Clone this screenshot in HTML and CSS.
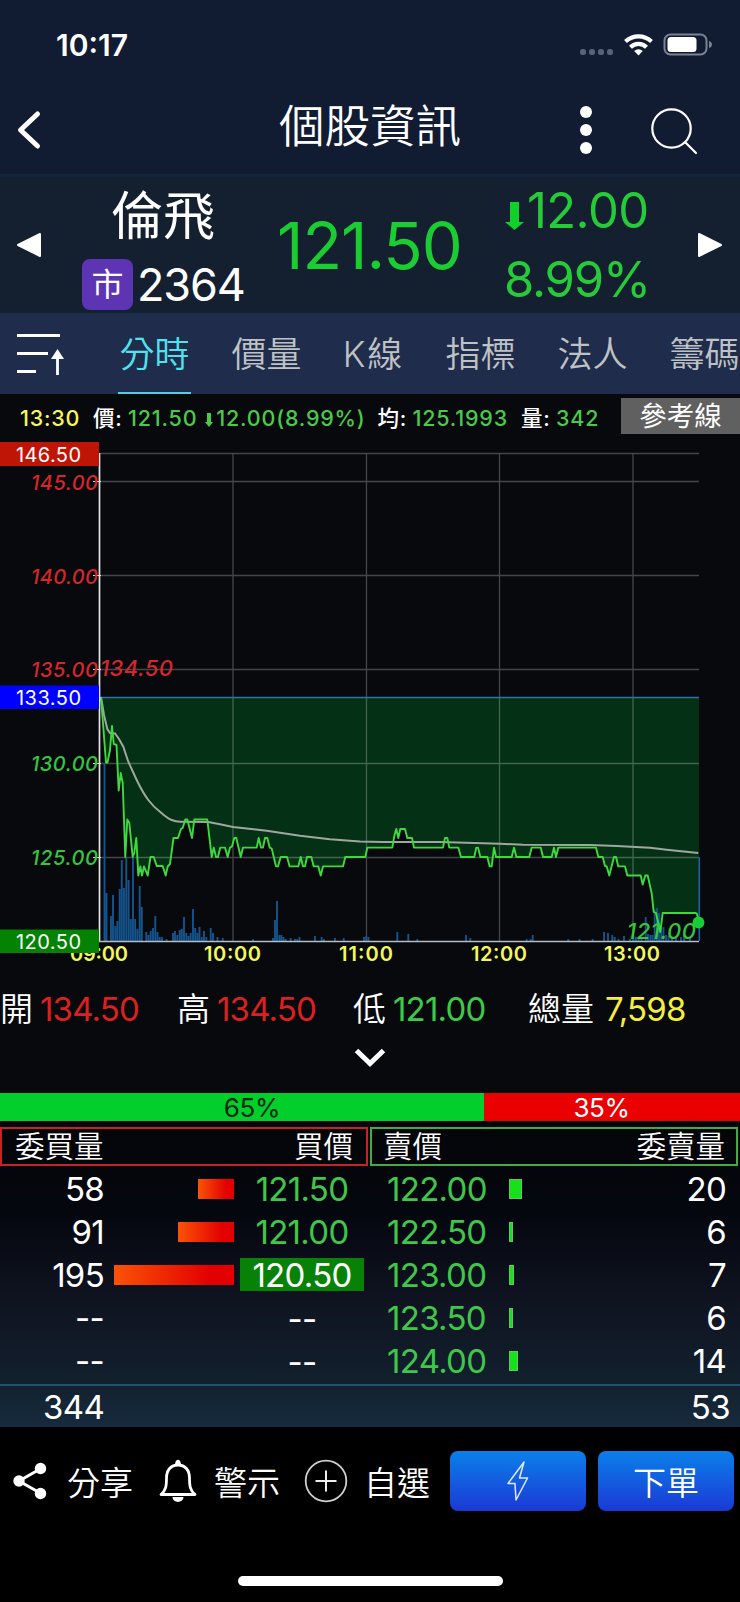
FILE: index.html
```html
<!DOCTYPE html>
<html lang="zh-Hant">
<head>
  <meta charset="UTF-8">
  <title>個股資訊</title>
  <link rel="stylesheet" href="styles.css">
</head>
<body>
  <div class="status-bar">
    <span class="clock">10:17</span>
    <svg class="status-icons" width="136" height="26" viewBox="0 0 136 26">
      <g fill="#5a6277">
        <rect x="4" y="16" width="6" height="6" rx="2.5"/>
        <rect x="13" y="16" width="6" height="6" rx="2.5"/>
        <rect x="22" y="16" width="6" height="6" rx="2.5"/>
        <rect x="31" y="16" width="6" height="6" rx="2.5"/>
      </g>
      <g fill="none" stroke="#fff" stroke-width="4.2">
        <path d="M49.500 8.500a19 19 0 0 1 26 0"/>
        <path d="M54.500 14.200a11.500 11.500 0 0 1 16 0"/>
      </g>
      <path d="M62.500 22.500l-4.300-4.600a6.200 6.200 0 0 1 8.600 0z" fill="#fff"/>
      <rect x="88.500" y="1.500" width="42" height="20" rx="6" fill="none" stroke="#7a8192" stroke-width="2"/>
      <rect x="91.500" y="4" width="29" height="15" rx="3.500" fill="#fff"/>
      <path d="M133 8c4 1 4 6 0 7z" fill="#7a8192"/>
    </svg>
  </div>

  <header class="nav">
    <svg class="back" width="26" height="40" viewBox="0 0 26 40">
      <path d="M21.500 4L4.500 20l17 16" fill="none" stroke="#fff" stroke-width="5" stroke-linecap="round" stroke-linejoin="round"/>
    </svg>
    <h1>個股資訊</h1>
    <svg class="more" width="14" height="50" viewBox="0 0 14 50">
      <g fill="#fff"><circle cx="6" cy="7" r="6"/><circle cx="6" cy="25" r="6"/><circle cx="6" cy="43" r="6"/></g>
    </svg>
    <svg class="search" width="48" height="48" viewBox="0 0 48 48">
      <circle cx="21.500" cy="21.500" r="19.200" fill="none" stroke="#fff" stroke-width="2.200"/>
      <path d="M35.500 35.500L46 46" stroke="#fff" stroke-width="2.200" stroke-linecap="round"/>
    </svg>
  </header>

  <section class="quote">
    <svg class="prev" width="26" height="26" viewBox="0 0 26 26"><path d="M24 2v22L2 13z" fill="#fff" stroke="#fff" stroke-width="2" stroke-linejoin="round"/></svg>
    <div class="stock">
      <div class="stock-name">倫飛</div>
      <div class="stock-id"><span class="market">市</span><span class="code">2364</span></div>
    </div>
    <div class="price">121.50</div>
    <div class="change">
      <div class="diff">
        <svg width="19" height="28" viewBox="0 0 19 28"><path d="M5 0h9v20h5l-9.500 8L0 20h5z" fill="#10d02c"/></svg>
        <span>12.00</span>
      </div>
      <div class="percent">8.99%</div>
    </div>
    <svg class="next" width="26" height="26" viewBox="0 0 26 26"><path d="M2 2v22l22-11z" fill="#fff" stroke="#fff" stroke-width="2" stroke-linejoin="round"/></svg>
  </section>

  <nav class="tabs">
    <svg class="sort" width="48" height="44" viewBox="0 0 48 44">
      <path d="M0 3.500h43M0 21.500h31M0 39.500h19M40.500 43V26" fill="none" stroke="#fff" stroke-width="2.800"/>
      <path d="M34 27l6.500-10L47 27z" fill="#fff"/>
    </svg>
    <span class="tab active">分時</span>
    <span class="tab">價量</span>
    <span class="tab tab-k">K線</span>
    <span class="tab">指標</span>
    <span class="tab">法人</span>
    <span class="tab">籌碼</span>
  </nav>

  <div class="info">
    <span class="time">13:30</span>
    <span class="label">價:</span>
    <span class="value">121.50</span>
    <svg class="down" width="8" height="14" viewBox="0 0 8 14"><path d="M2 0h4v9h2l-4 5-4-5h2z" fill="#4cc94c"/></svg>
    <span class="value">12.00(8.99%)</span>
    <span class="label avg">均:</span>
    <span class="value">125.1993</span>
    <span class="label vol">量:</span>
    <span class="value">342</span>
    <span class="ref-line">參考線</span>
  </div>

  <svg class="chart" width="740" height="536" viewBox="0 434 740 536">
    <!-- area between previous close and price -->
    <path id="area" fill="#043015"/>
    <!-- grid -->
    <path class="grid" d="M99 453.500H699M99 481.500H699M99 575.500H699M99 669.500H699M99 763.500H699M99 857.500H699M233 453V941M366.500 453V941M499.500 453V941M633 453V941"/>
    <path d="M99 697.500H699" stroke="#2e74a8" stroke-width="1.500"/>
    <!-- volume -->
    <path class="volume" d="M104.500 941V763M106.500 941V893M111 941V916M113 941V895M115.300 941V926M117.400 941V921M119.700 941V889M121.800 941V860M124 941V888M126.300 941V857M128.600 941V880M130.800 941V919M133 941V857M135.200 941V919M137.400 941V929M139.700 941V886M141.800 941V907M146.300 941V932M148.500 941V935M150.700 941V931M153 941V928M155.300 941V916M157.500 941V932M159.700 941V937M162 941V937M166.500 941V939M173 941V933M175 941V931M177.300 941V935M179.700 941V930M181.800 941V929M184 941V917M186.300 941V933M188.500 941V936M190.700 941V933M193 941V909M195.200 941V928M197.400 941V933M199.500 941V927M201.800 941V937M204 941V931M206.300 941V937M210.700 941V928M213 941V933M217.500 941V937M222.700 941V938M253 941V939M273 941V938M275 941V920M277 941V901M279.300 941V935M281.400 941V935M283.500 941V937M285.700 941V939M290.700 941V938M295 941V939M297.300 941V939M299.500 941V937M315 941V936M321.700 941V937M324 941V939M335 941V938M343.700 941V938M364 941V937M366.200 941V936M368.400 941V937M397.300 941V932M408.300 941V934M417.300 941V939M466 941V935M470.300 941V938M526.700 941V939M530.500 941V939M532.700 941V935M568.300 941V939M579.500 941V939M592.700 941V939M604 941V932M608 941V933M612.300 941V935M614.700 941V937M618.500 941V939M624 941V936M630 941V939M633.500 941V936M636 941V937M638.500 941V937M641.500 941V937M645.700 941V917M648 941V934M650.300 941V935M652.500 941V935M654.700 941V910M656.900 941V908M659 941V913M661.200 941V928M663.500 941V927M666 941V935M668.500 941V936M672 941V937M676 941V936M681 941V937M684 941V935M690 941V937"/>
    <path d="M699.300 941V857" stroke="#1d5fa8" stroke-width="1.600"/>
    <!-- average -->
    <path d="M101 697L104 715L107.300 729L110 733L115 733.500L119 739L123.300 746.700L128.300 761.700L136.700 780Q143 793 148.300 800T160 811.700Q167 818 171.700 820T181.700 821.700L208.300 822L220 824.300L233 827L260 830L266.700 830.700L300 835.700L330 839.300L360 841.500L383 842L440 842L500 843.700L523 844.700L590 845L616.700 846L650 847.700L666.700 849.700L698.300 853" fill="none" stroke="#9fa79f" stroke-width="2"/>
    <!-- price -->
    <path id="line" class="price-line" d="M101 697.500L106 762.500L107.500 762.500L110 750L112 726L113.700 744L116.500 745L118.700 790.500L120.700 773L122.700 783L125.300 857L127.300 819.500L129.300 823L132.700 857L134.300 853L136.300 838L138.300 875.500L140.300 866.500L142 875.500L144 866.500L147.700 875.500L150.500 857L153.700 857L156.700 866L162.700 866L165.700 875.500L167.700 866.500L170 864L173.500 838L178 838L181 829L182.700 828L185.300 819.500L187.300 819.500L192 838L194.300 819.500L207.300 819.500L211.700 857L213.700 847.600L216 857L218 857L220.300 847.600L225 847.600L227.700 857L230 847.600L232 846.500L234.300 838L236.300 838L240.700 857L243 847.600L256.700 847.600L258.700 838L261 847.600L263 847.600L265 838L267.300 838L269.700 847.600L271.700 848.500L276 866.400L278 866.400L280.700 857L287 857L289.700 866.400L298.300 866.400L300.700 857L303 866.400L305 866.400L307 857L311.300 857L313.700 866.400L318.300 866.400L320.700 875.500L323 866.400L343 866.400L345.300 857L365.300 857L367.300 847.600L392.300 847.600L394.300 836L396.300 829L398.300 838L400.300 829L405 829L407.300 838L412 838L414 847.600L443 847.600L445 838L447.300 838L449.300 847.600L458.300 847.600L461 857L474.300 857L476.300 847.600L478 847.600L480.300 857L487.300 857L489.700 866.400L491.700 866.400L494 847.600L496 857L511.700 857L514 847.600L516.300 857L529.300 857L531.700 847.600L540.700 847.600L543 857L551.700 857L554 847.600L556 857L558.300 847.600L596 847.600L598.300 857L602.700 857L605 866L606.700 866.400L609.300 875.500L614 857L616 857L618.300 866.400L625 866.400L627.300 875.500L640.700 875.500L642.700 884.600L645.300 875.500L647.700 875.500L651.700 893.500L653.700 912L656 913L660.300 932L662.700 913L695.700 913L697 914L699 922"/>
    <!-- axes -->
    <path d="M99.500 453V941" stroke="#e4e4e4" stroke-width="1.700"/>
    <path d="M99 941.500H699" stroke="#b5bec7" stroke-width="1.500"/>
    <path d="M93 481.500h8M93 575.500h8M93 669.500h8M93 763.500h8M93 857.500h8" stroke="#ddd"/>
    <g class="axis red">
      <text x="31" y="489.500" textLength="67">145.00</text>
      <text x="31" y="583.500" textLength="67">140.00</text>
      <text x="31" y="677" textLength="67">135.00</text>
    </g>
    <g class="axis green">
      <text x="31" y="770.500" textLength="67">130.00</text>
      <text x="31" y="864.500" textLength="67">125.00</text>
    </g>
    <text class="mark red" x="100" y="676" textLength="73">134.50</text>
    <text class="mark green" x="627" y="938.500" textLength="69">121.00</text>
    <circle cx="698.500" cy="922.500" r="5.900" fill="#15cf35"/>
    <g class="hours">
      <text x="70" y="960.500" textLength="58">09:00</text>
      <text x="204" y="960.500" textLength="57">10:00</text>
      <text x="339" y="960.500" textLength="54">11:00</text>
      <text x="471" y="960.500" textLength="56">12:00</text>
      <text x="604" y="960.500" textLength="56">13:00</text>
    </g>
    <rect y="442" width="99" height="24" fill="#bf1506"/>
    <rect y="685.500" width="99" height="23.500" fill="#0000ff"/>
    <rect y="929.500" width="99" height="23.500" fill="#038203"/>
    <g class="tags">
      <text x="16" y="461.500" textLength="65">146.50</text>
      <text x="16" y="705" textLength="65">133.50</text>
      <text x="16" y="949" textLength="65">120.50</text>
    </g>
  </svg>

  <div class="stats">
    <div class="stat"><span>開</span><b class="up">134.50</b></div>
    <div class="stat"><span>高</span><b class="up">134.50</b></div>
    <div class="stat"><span>低</span><b class="dn">121.00</b></div>
    <div class="stat stat-total"><span>總量</span><b class="total">7,598</b></div>
  </div>
  <div class="expand">
    <svg width="32" height="20" viewBox="0 0 32 20"><path d="M2.500 2.500L16 15.500 29.500 2.500" fill="none" stroke="#fff" stroke-width="5"/></svg>
  </div>

  <div class="ratio">
    <div class="ratio-buy" style="width: 484px">65%</div>
    <div class="ratio-sell">35%</div>
  </div>

  <section class="depth">
    <div class="side buy">
      <div class="side-head"><span>委買量</span><span>買價</span></div>
      <div class="row"><span class="qty">58</span><span class="track"><i style="width: 36px"></i></span><span class="px">121.50</span></div>
      <div class="row"><span class="qty">91</span><span class="track"><i style="width: 56px"></i></span><span class="px">121.00</span></div>
      <div class="row"><span class="qty">195</span><span class="track"><i style="width: 120px"></i></span><span class="px hit">120.50</span></div>
      <div class="row"><span class="qty">--</span><span class="track"></span><span class="px none">--</span></div>
      <div class="row"><span class="qty">--</span><span class="track"></span><span class="px none">--</span></div>
    </div>
    <div class="side sell">
      <div class="side-head"><span>賣價</span><span>委賣量</span></div>
      <div class="row"><span class="px">122.00</span><span class="track"><i style="width: 13px"></i></span><span class="qty">20</span></div>
      <div class="row"><span class="px">122.50</span><span class="track"><i style="width: 4px"></i></span><span class="qty">6</span></div>
      <div class="row"><span class="px">123.00</span><span class="track"><i style="width: 5px"></i></span><span class="qty">7</span></div>
      <div class="row"><span class="px">123.50</span><span class="track"><i style="width: 4px"></i></span><span class="qty">6</span></div>
      <div class="row"><span class="px">124.00</span><span class="track"><i style="width: 9px"></i></span><span class="qty">14</span></div>
    </div>
  </section>
  <div class="sum"><span>344</span><span>53</span></div>

  <footer class="actions">
    <svg class="share" width="34" height="38" viewBox="0 0 34 38">
      <path d="M28 6.500L6 19l22 12.500" fill="none" stroke="#fff" stroke-width="3"/>
      <g fill="#fff"><circle cx="27.500" cy="6.500" r="5.700"/><circle cx="6" cy="19" r="5.700"/><circle cx="27.500" cy="31.500" r="5.700"/></g>
    </svg>
    <span class="share-text">分享</span>
    <svg class="bell" width="40" height="44" viewBox="0 0 40 44">
      <path d="M3 35.500C8 31 8.500 27 8.500 19C8.500 11 13 6 20 6S31.500 11 31.500 19C31.500 27 32 31 37 35.500z" fill="none" stroke="#fff" stroke-width="2.800" stroke-linejoin="round"/>
      <path d="M17 6c0-7 6-7 6 0zM14.500 38h11c-.5 6.500-10.500 6.500-11 0z" fill="#fff"/>
    </svg>
    <span class="bell-text">警示</span>
    <svg class="add" width="44" height="44" viewBox="0 0 44 44">
      <circle cx="22" cy="22" r="20.300" fill="none" stroke="#cfcfcf" stroke-width="1.800"/>
      <path d="M22 11.500v21M11.500 22h21" stroke="#eee" stroke-width="2"/>
    </svg>
    <span class="add-text">自選</span>
    <span class="btn flash">
      <svg width="24" height="42" viewBox="0 0 24 42"><path d="M18 2L2 23.500h7L10 40l11.500-22H13.500z" fill="none" stroke="#dceaff" stroke-width="1.500" stroke-linejoin="round"/></svg>
    </span>
    <span class="btn">下單</span>
  </footer>
  <div class="home"></div>

  <script>
    // close the price line against the 133.50 level
    const line = document.getElementById("line").getAttribute("d");
    document.getElementById("area").setAttribute("d", line + "V697.5H101z");
  </script>
</body>
</html>
```

FILE: styles.css
```css
* {
  box-sizing: border-box;
}

body {
  margin: 0;
  width: 740px;
  height: 1602px;
  overflow: hidden;
  background: #07090d;
  color: #fff;
  font-family: Inter, "Noto Sans CJK TC", sans-serif;
  font-weight: 400;
}

svg {
  display: block;
  flex: none;
}

.status-bar {
  display: flex;
  justify-content: space-between;
  height: 80px;
  padding: 33px 28px 0 56px;
  background: #111b32;
}

.clock {
  font-size: 30px;
  line-height: 25px;
  font-weight: 600;
}

.nav {
  display: flex;
  align-items: center;
  height: 97px;
  padding: 0 42px 0 16px;
  background: #111b32;
  border-bottom: 3px solid #10263c;
}

.nav h1 {
  margin: 0 119px 0 237px;
  width: 182px;
  font-size: 45.500px;
  line-height: 60px;
  font-weight: 350;
  white-space: nowrap;
}

.back {
  margin-top: 6px;
}

.more {
  margin-top: 6px;
}

.search {
  margin: 8px 0 0 56px;
}

.quote {
  display: flex;
  align-items: center;
  height: 136px;
  padding: 0 16px;
  background: #141f2f;
}

.prev,
.next {
  margin-top: -1px;
}

.stock {
  width: 164px;
  margin-left: 40px;
}

.stock-name {
  height: 75px;
  padding: 6px 0 0 29px;
  font-size: 52px;
  line-height: 68px;
}

.stock-id {
  display: flex;
  align-items: center;
  height: 61px;
}

.market {
  width: 51px;
  height: 51px;
  margin: 3px 4px 0 0;
  border-radius: 8px;
  background: #5c34b4;
  font-size: 32px;
  line-height: 52px;
  text-align: center;
}

.code {
  margin-top: 4px;
  font-size: 45px;
  letter-spacing: -1.100px;
}

.price {
  width: 190px;
  margin: 0 0 0 31px;
  color: #1bcc32;
  font-size: 65px;
  letter-spacing: -1px;
}

.change {
  width: 150px;
  margin-left: 37px;
  color: #26cb3a;
  font-size: 49px;
  line-height: 69px;
  letter-spacing: -1px;
}

.diff {
  display: flex;
  align-items: center;
  gap: 3px;
  padding-left: 1px;
  letter-spacing: -.600px;
}

.percent {
  letter-spacing: -1.200px;
}

.diff svg {
  margin-top: 10px;
}

.next {
  margin-left: 43px;
}

.tabs {
  display: flex;
  align-items: center;
  height: 81px;
  padding-left: 17px;
  background: #1f2c4c;
  border-top: 1px solid #14304a;
  overflow: hidden;
}

.sort {
  margin-right: 53px;
}

.tab {
  flex: none;
  width: 73px;
  height: 80px;
  margin-right: 39px;
  color: #bfc2c5;
  font-size: 35px;
  line-height: 81px;
  font-weight: 350;
  text-align: center;
  white-space: nowrap;
}

.tab-k {
  width: 63px;
  letter-spacing: 2px;
}

.tab.active {
  color: #4fe3ec;
  border-bottom: 2px solid #4fd0dc;
}

.info {
  display: flex;
  align-items: center;
  height: 40px;
  padding: 4px 0 0 20px;
  font-size: 21.500px;
  line-height: 30px;
  font-weight: 500;
  letter-spacing: .8px;
  white-space: nowrap;
}

.info > span:not(.ref-line) {
  padding-top: 4px;
}

.time {
  width: 73px;
  color: #f7f75a;
}

.label {
  width: 35px;
}

.value {
  color: #4cc94c;
}

.down {
  margin: 8px 3px 0 8px;
}

.avg {
  margin-left: 12px;
}

.vol {
  margin-left: 13px;
}

.ref-line {
  width: 119px;
  height: 36px;
  margin-left: auto;
  background: #606060;
  font-size: 27.500px;
  line-height: 37px;
  font-weight: 400;
  letter-spacing: 0;
  text-align: center;
}

.grid {
  fill: none;
  stroke: #fff;
  stroke-opacity: .25;
  stroke-width: 1.300;
}

.volume {
  fill: none;
  stroke: #15548c;
  stroke-width: 1.900;
}

.price-line {
  fill: none;
  stroke: #3fd83f;
  stroke-width: 1.900;
  stroke-linejoin: round;
}

.axis,
.mark {
  font-size: 20px;
  font-weight: 500;
  font-style: italic;
}

.mark {
  font-size: 22px;
}

.red {
  fill: #d5262b;
}

.green {
  fill: #35c53e;
}

.hours {
  font-size: 20px;
  font-weight: 600;
  fill: #f4f75c;
}

.tags {
  font-size: 20px;
  fill: #fff;
}

.stats {
  display: grid;
  grid-template-columns: 177px 176px 175px 1fr;
  height: 78px;
  font-size: 33px;
  line-height: 79px;
  font-weight: 350;
}

.stat {
  display: flex;
  gap: 7px;
  white-space: nowrap;
}

.stat-total {
  gap: 11px;
}

.stat b {
  font-weight: 400;
  letter-spacing: -.8px;
}

.up {
  color: #dc2020;
}

.dn {
  color: #3dc94a;
}

.total {
  color: #f3ef3c;
}

.expand {
  display: flex;
  justify-content: center;
  height: 45px;
}

.ratio {
  display: flex;
  height: 28px;
  font-size: 26px;
  line-height: 30px;
  font-weight: 400;
  letter-spacing: -.4px;
  text-align: center;
}

.ratio-buy {
  padding-left: 20px;
  background: #02cf2b;
  color: #06290c;
}

.ratio-sell {
  flex: 1;
  padding-right: 21px;
  background: #ea0000;
}

.depth {
  display: grid;
  grid-template-columns: 368px 368px;
  gap: 2px;
  height: 263px;
  padding-top: 6px;
  background: linear-gradient(#040508, #05070f 35%, #101522 72%, #12202e);
}

.side-head {
  display: flex;
  justify-content: space-between;
  height: 39px;
  margin-bottom: 1px;
  padding: 0 13px;
  border: 2px solid #c42424;
  font-size: 29.500px;
  line-height: 35px;
  font-weight: 350;
}

.sell .side-head {
  padding: 0 11px;
  border-color: #46a846;
}

.row {
  display: flex;
  align-items: center;
  height: 43.200px;
  font-size: 33px;
  letter-spacing: -.7px;
}

.track {
  display: flex;
  height: 20px;
}

.buy .qty {
  width: 104px;
  text-align: right;
}

.buy .track {
  width: 130px;
  justify-content: flex-end;
}

.buy .track i {
  background: linear-gradient(to right, #fb5306, #e20000 80%);
}

.px {
  color: #40c64a;
}

.buy .px {
  width: 124px;
  height: 33px;
  margin-left: 6px;
  line-height: 34px;
  text-align: center;
}

.buy .hit {
  background: #078207;
  color: #fff;
}

.buy .none {
  color: #fff;
}

.sell .px {
  width: 121px;
  padding-left: 17px;
}

.sell .track {
  width: 100px;
  margin-left: 18px;
}

.sell .track i {
  background: #16e11b;
  border: 1px solid #5fc95f;
}

.sell .qty {
  flex: 1;
  padding-right: 12px;
  text-align: right;
}

.sum {
  display: flex;
  justify-content: space-between;
  height: 43px;
  padding: 0 10px 0 43px;
  border-top: 2px solid #22536e;
  background: linear-gradient(#13212f, #162b3d);
  font-size: 33px;
  line-height: 43px;
  letter-spacing: -.6px;
}

.actions {
  display: flex;
  align-items: center;
  height: 149px;
  padding: 0 0 41px 13px;
  background: #000;
  font-size: 33px;
  font-weight: 350;
  white-space: nowrap;
}

.share-text {
  margin: 0 25px 0 20px;
}

.bell-text {
  margin: 0 24px 0 16px;
}

.add-text {
  margin: 0 20px 0 16px;
}

.btn {
  display: flex;
  justify-content: center;
  align-items: center;
  width: 136px;
  height: 60px;
  border-radius: 8px;
  background: linear-gradient(#0b80ea, #1b39d5);
}

.flash {
  margin-right: 12px;
}

.home {
  height: 26px;
  background: #000;
}

.home::before {
  content: "";
  display: block;
  width: 265px;
  height: 10px;
  margin: 0 auto;
  border-radius: 5px;
  background: #fff;
}
```
